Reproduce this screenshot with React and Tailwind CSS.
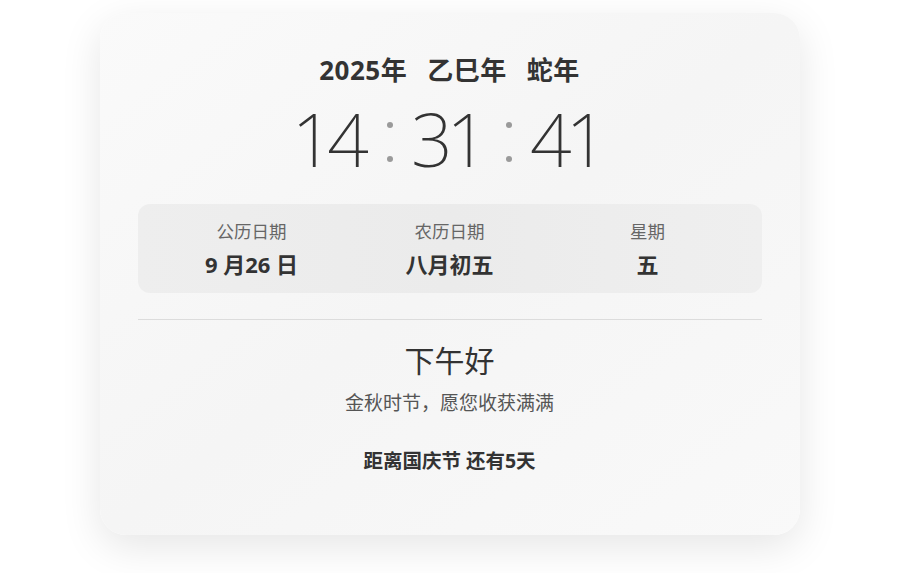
import React from 'react';

const cjk = { fontFamily: '"Noto Sans", "Noto Sans CJK SC", sans-serif' };

function Colon() {
  return (
    <span className="flex flex-col justify-center gap-[28px] px-[18px] h-[60px] mt-[6px]">
      <span className="block w-[6px] h-[6px] rounded-full bg-[#9a9a9a]" />
      <span className="block w-[6px] h-[6px] rounded-full bg-[#9a9a9a]" />
    </span>
  );
}

function InfoCell({ label, value }) {
  return (
    <div className="flex flex-col items-center">
      <div className="text-[17.5px] leading-[24px] text-[#666]">{label}</div>
      <div className="mt-[7px] text-[22px] leading-[28px] font-bold text-[#333]">{value}</div>
    </div>
  );
}

export default function App() {
  return (
    <div className="min-h-screen w-full bg-white flex justify-center pt-[13px]" style={cjk}>
      <div className="w-[700px] h-[522px] rounded-[26px] bg-gradient-to-br from-[#fafafa] via-[#f5f5f5] to-[#f9f9f9] shadow-[0_12px_40px_rgba(0,0,0,0.10)] px-[38px] pt-[40px]">
        <div className="flex justify-center gap-[20px] text-[26px] leading-[34px] font-bold text-[#333] tracking-[0.5px]">
          <span>2025年</span>
          <span>乙巳年</span>
          <span>蛇年</span>
        </div>
        <div className="mt-[12px] flex items-center justify-center text-[#333] font-extralight text-[73px] leading-[80px]">
          <span className="tracking-[-6px] mr-[6px]">14</span>
          <Colon />
          <span className="tracking-[-6px] mr-[6px]">31</span>
          <Colon />
          <span className="tracking-[-6px] mr-[6px]">41</span>
        </div>
        <div className="mt-[25px] h-[89px] rounded-[12px] bg-gradient-to-r from-[#eeeeee] via-[#ebebeb] to-[#efefef] grid grid-cols-3 items-center px-[15px]">
          <InfoCell label="公历日期" value="9 月26 日" />
          <InfoCell label="农历日期" value="八月初五" />
          <InfoCell label="星期" value="五" />
        </div>
        <div className="mt-[26px] border-t border-[#dcdcdc]" />
        <div className="mt-[21px] text-center text-[30px] leading-[40px] text-[#333]">下午好</div>
        <div className="mt-[9px] text-center text-[19px] leading-[26px] text-[#555]">金秋时节，愿您收获满满</div>
        <div className="mt-[32px] text-center text-[19.5px] leading-[26px] font-bold text-[#333]">距离国庆节 还有5天</div>
      </div>
    </div>
  );
}
